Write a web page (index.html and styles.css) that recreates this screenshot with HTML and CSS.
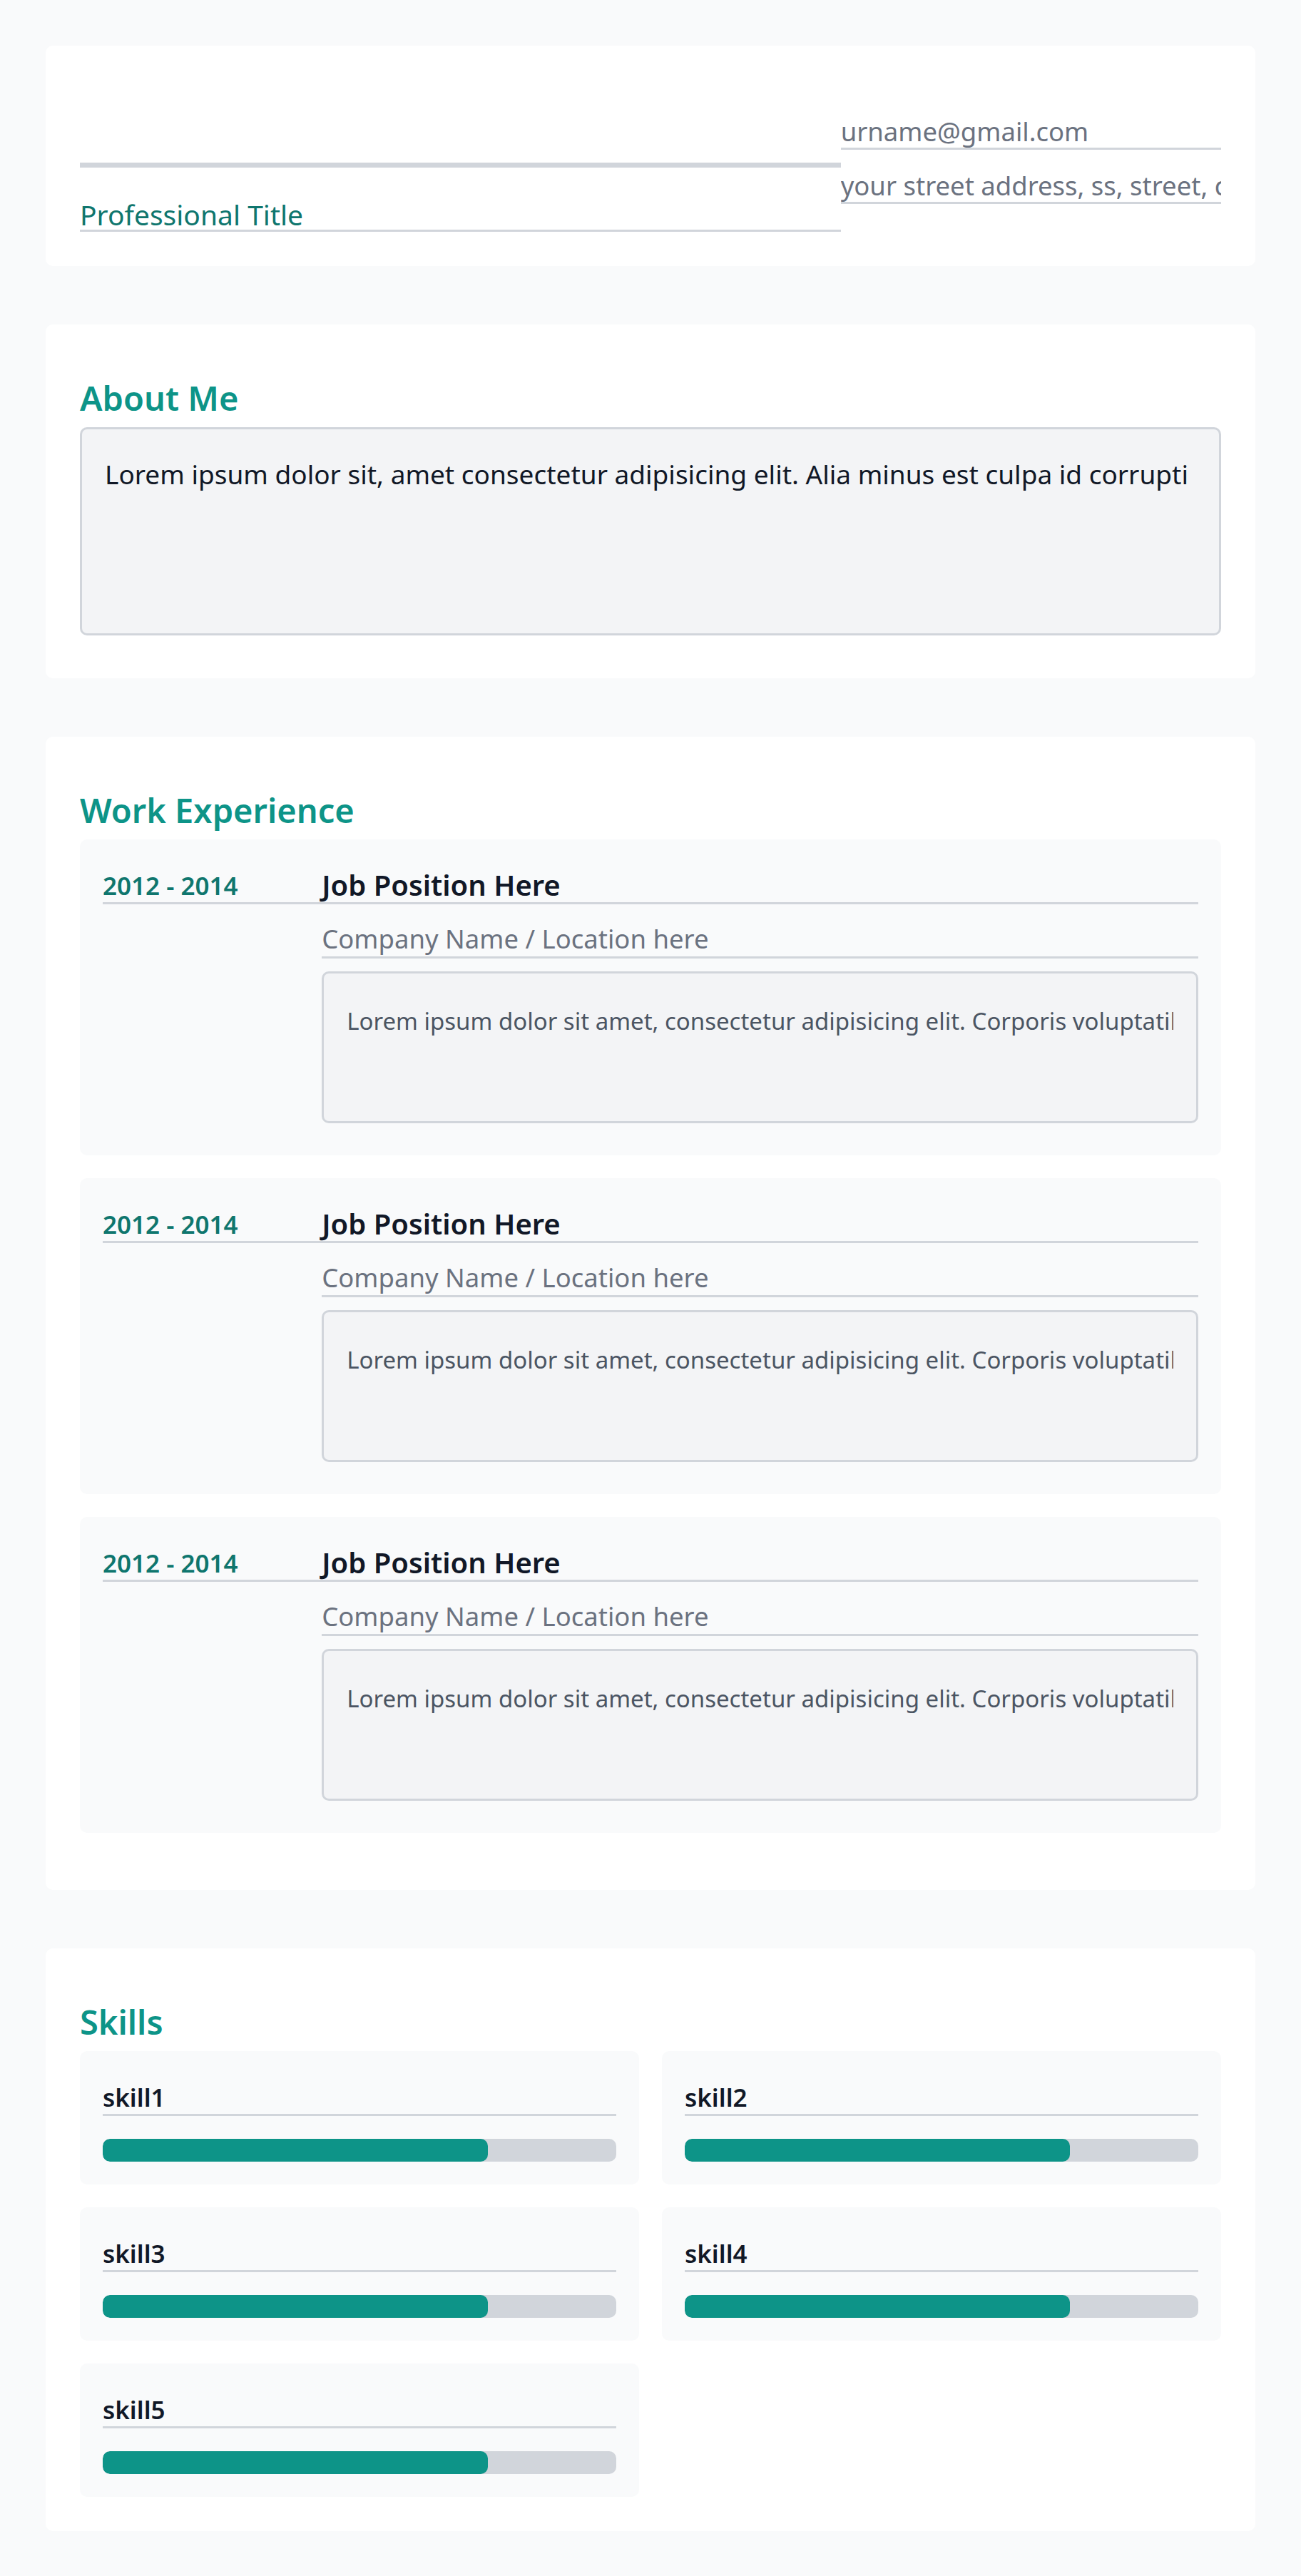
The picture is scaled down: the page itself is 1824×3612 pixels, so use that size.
FILE: index.html
```html
<!DOCTYPE html>
<html lang="en">
<head>
<meta charset="utf-8">
<title>Resume</title>
<link rel="stylesheet" href="styles.css">
</head>
<body>
<main class="page">
  <section class="card">
    <div class="header-grid">
      <div class="identity">
        <div class="name-field"></div>
        <div class="title-field">Professional Title</div>
      </div>
      <div class="contact">
        <div class="contact-field">urname@gmail.com</div>
        <div class="contact-field"><div class="clip">your street address, ss, street, city</div></div>
      </div>
    </div>
  </section>

  <section class="card">
    <h2 class="section-title">About Me</h2>
    <div class="textbox about-box"><div class="clip">Lorem ipsum dolor sit, amet consectetur adipisicing elit. Alia minus est culpa id corrupti</div></div>
  </section>

  <section class="card">
    <h2 class="section-title">Work Experience</h2>
    <div class="job">
      <div class="job-date">2012 - 2014</div>
      <div class="job-main">
        <div class="job-title">Job Position Here</div>
        <div class="job-company">Company Name / Location here</div>
        <div class="textbox job-box"><div class="clip">Lorem ipsum dolor sit amet, consectetur adipisicing elit. Corporis voluptatibus</div></div>
      </div>
    </div>
    <div class="job">
      <div class="job-date">2012 - 2014</div>
      <div class="job-main">
        <div class="job-title">Job Position Here</div>
        <div class="job-company">Company Name / Location here</div>
        <div class="textbox job-box"><div class="clip">Lorem ipsum dolor sit amet, consectetur adipisicing elit. Corporis voluptatibus</div></div>
      </div>
    </div>
    <div class="job">
      <div class="job-date">2012 - 2014</div>
      <div class="job-main">
        <div class="job-title">Job Position Here</div>
        <div class="job-company">Company Name / Location here</div>
        <div class="textbox job-box"><div class="clip">Lorem ipsum dolor sit amet, consectetur adipisicing elit. Corporis voluptatibus</div></div>
      </div>
    </div>
  </section>

  <section class="card skills-card">
    <h2 class="section-title">Skills</h2>
    <div class="skills-grid">
      <div class="skill">
        <div class="skill-name">skill1</div>
        <div class="bar"><div class="bar-fill" style="width:75%"></div></div>
      </div>
      <div class="skill">
        <div class="skill-name">skill2</div>
        <div class="bar"><div class="bar-fill" style="width:75%"></div></div>
      </div>
      <div class="skill">
        <div class="skill-name">skill3</div>
        <div class="bar"><div class="bar-fill" style="width:75%"></div></div>
      </div>
      <div class="skill">
        <div class="skill-name">skill4</div>
        <div class="bar"><div class="bar-fill" style="width:75%"></div></div>
      </div>
      <div class="skill">
        <div class="skill-name">skill5</div>
        <div class="bar"><div class="bar-fill" style="width:75%"></div></div>
      </div>
    </div>
  </section>
</main>
</body>
</html>
```

FILE: styles.css
```css
* { box-sizing: border-box; }

html, body {
  margin: 0;
  padding: 0;
}

body {
  background: #f9fafb;
  font-family: "Noto Sans", "Open Sans", sans-serif;
  color: #111827;
}

.page {
  padding: 64px;
  display: flex;
  flex-direction: column;
  gap: 82px;
}

.card {
  background: #ffffff;
  border-radius: 10px;
  padding: 48px;
}

.clip {
  white-space: nowrap;
  overflow-x: clip;
  overflow-y: visible;
}

/* Header */
.header-grid {
  display: grid;
  grid-template-columns: minmax(0, 2fr) minmax(0, 1fr);
  align-items: center;
}

.identity,
.contact {
  min-width: 0;
}

.name-field {
  height: 123px;
  border-bottom: 7px solid #d1d5db;
}

.title-field {
  margin-top: 31px;
  padding-top: 13px;
  line-height: 43px;
  font-size: 39px;
  color: #0f766e;
  border-bottom: 3px solid #d1d5db;
}

.contact-field {
  padding-top: 10px;
  line-height: 46px;
  font-size: 36.5px;
  color: #6b7280;
  white-space: nowrap;
  border-bottom: 3px solid #d1d5db;
}

.contact-field + .contact-field {
  margin-top: 17px;
}

/* Section titles */
.section-title {
  margin: 0;
  padding-top: 15px;
  line-height: 81px;
  font-size: 47px;
  font-weight: 600;
  color: #0d9488;
}

/* Text boxes */
.textbox {
  background: #f3f4f6;
  border: 3px solid #d1d5db;
  border-radius: 10px;
  padding-left: 32px;
  padding-right: 32px;
}

.about-box {
  height: 292px;
  padding-top: 35px;
  margin-bottom: 12px;
  font-size: 37px;
  line-height: 56px;
  color: #111827;
}

/* Jobs */
.job {
  display: grid;
  grid-template-columns: minmax(0, 1fr) minmax(0, 4fr);
  background: #f9fafb;
  border-radius: 10px;
  padding: 32px 32px 45px;
  margin-bottom: 32px;
}

.job-main {
  min-width: 0;
}

.job-date {
  align-self: start;
  padding-top: 10px;
  line-height: 46px;
  font-size: 35px;
  font-weight: 600;
  color: #0f766e;
  border-bottom: 3px solid #d1d5db;
}

.job-title {
  padding-top: 7px;
  line-height: 49px;
  font-size: 40px;
  font-weight: 600;
  color: #111827;
  border-bottom: 3px solid #d1d5db;
}

.job-company {
  margin-top: 16px;
  padding-top: 7px;
  line-height: 50px;
  font-size: 36.5px;
  color: #6b7280;
  border-bottom: 3px solid #d1d5db;
}

.job-box {
  margin-top: 18px;
  height: 213px;
  padding-top: 42px;
  font-size: 33px;
  line-height: 50px;
  color: #4b5563;
}

/* Skills */
.skills-grid {
  display: grid;
  grid-template-columns: minmax(0, 1fr) minmax(0, 1fr);
  gap: 32px;
}

.skill {
  background: #f9fafb;
  border-radius: 10px;
  padding: 32px;
}

.skill-name {
  padding-top: 9px;
  line-height: 47px;
  font-size: 35px;
  font-weight: 600;
  color: #111827;
  border-bottom: 3px solid #d1d5db;
}

.bar {
  margin-top: 32px;
  height: 32px;
  background: #d1d5db;
  border-radius: 10px;
  overflow: hidden;
}

.bar-fill {
  height: 100%;
  background: #0d9488;
  border-radius: 10px;
}
```
